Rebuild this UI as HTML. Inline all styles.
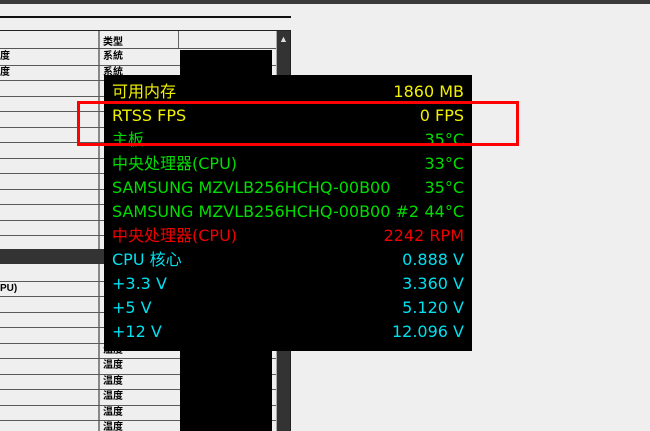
<!DOCTYPE html>
<html><head><meta charset="utf-8"><style>
body{margin:0;width:650px;height:431px;overflow:hidden;background:#efefef;position:relative;font-family:"Liberation Sans","Noto Sans CJK SC",sans-serif}
.a{position:absolute}
.row{position:absolute;left:0;width:276px;height:15.5px;border-bottom:1px solid #5a5a5a;font-size:10px;font-weight:bold;line-height:15px;overflow:hidden}
.ov{position:absolute;left:104px;top:75px;width:368px;height:276px;background:#000;font-family:"DejaVu Sans","Noto Sans CJK SC",sans-serif;font-size:16px}
.ov div{position:absolute;left:8px;right:8px;height:24px;line-height:24px;white-space:nowrap}
.ov span{position:absolute;right:0;top:0}
</style></head><body>
<div class="a" style="left:0;top:0;width:650px;height:4px;background:#3a3a3a"></div>
<div class="a" style="left:0;top:16px;width:291px;height:2px;background:#111"></div>
<div class="a" style="left:0;top:30px;width:291px;height:1px;background:#222"></div>
<div class="a" style="left:290px;top:30px;width:1px;height:401px;background:#222"></div>
<div class="a" style="left:98px;top:31px;width:2px;height:400px;background:#888"></div>
<div class="a" style="left:178px;top:31px;width:1px;height:18px;background:#666"></div>
<div class="a" style="left:103px;top:33px;font-size:10px;font-weight:bold">类型</div>
<div class="a" style="left:0;top:48px;width:276px;height:1px;background:#555"></div>
<div class="row" style="top:49px"><span style="position:absolute;left:0">度</span><span style="position:absolute;left:103px">系統</span></div>
<div class="row" style="top:64.5px"><span style="position:absolute;left:0">度</span><span style="position:absolute;left:103px">系統</span></div>
<div class="row" style="top:80px"></div>
<div class="row" style="top:95.5px"></div>
<div class="row" style="top:111px"></div>
<div class="row" style="top:126.5px"></div>
<div class="row" style="top:142px"></div>
<div class="row" style="top:157.5px"></div>
<div class="row" style="top:173px"></div>
<div class="row" style="top:188.5px"></div>
<div class="row" style="top:204px"></div>
<div class="row" style="top:219.5px"></div>
<div class="row" style="top:235px"></div>
<div class="a" style="left:0;top:249px;width:276px;height:15px;background:#333"></div>
<div class="row" style="top:265px"></div>
<div class="row" style="top:280.5px"><span style="position:absolute;left:0">PU)</span></div>
<div class="row" style="top:296px"></div>
<div class="row" style="top:311.5px"></div>
<div class="row" style="top:327px"></div>
<div class="row" style="top:342.5px"><span style="position:absolute;left:103px">温度</span></div>
<div class="row" style="top:358px"><span style="position:absolute;left:103px">温度</span></div>
<div class="row" style="top:373.5px"><span style="position:absolute;left:103px">温度</span></div>
<div class="row" style="top:389px"><span style="position:absolute;left:103px">温度</span></div>
<div class="row" style="top:404.5px"><span style="position:absolute;left:103px">温度</span></div>
<div class="row" style="top:420px;height:11px;border-bottom:none"><span style="position:absolute;left:103px">温度</span></div>
<div class="a" style="left:180px;top:50px;width:92px;height:381px;background:#000"></div>
<div class="a" style="left:276px;top:31px;width:13px;height:400px;background:#333;border-left:1px solid #aaa"></div>
<div class="a" style="left:279px;top:34px;color:#ddd;font-size:9px">▲</div>
<div class="ov">
<div style="top:5px;color:#f0f000">可用内存<span>1860 MB</span></div>
<div style="top:29px;color:#f0f000">RTSS FPS<span>0 FPS</span></div>
<div style="top:53px;color:#00dd00">主板<span>35°C</span></div>
<div style="top:77px;color:#00dd00">中央处理器(CPU)<span>33°C</span></div>
<div style="top:101px;color:#00dd00">SAMSUNG MZVLB256HCHQ-00B00<span>35°C</span></div>
<div style="top:125px;color:#00dd00">SAMSUNG MZVLB256HCHQ-00B00 #2<span>44°C</span></div>
<div style="top:149px;color:#f00000">中央处理器(CPU)<span>2242 RPM</span></div>
<div style="top:173px;color:#00e0f0">CPU 核心<span>0.888 V</span></div>
<div style="top:197px;color:#00e0f0">+3.3 V<span>3.360 V</span></div>
<div style="top:221px;color:#00e0f0">+5 V<span>5.120 V</span></div>
<div style="top:245px;color:#00e0f0">+12 V<span>12.096 V</span></div>
</div>
<div class="a" style="left:77px;top:101px;width:436px;height:39px;border:3px solid #f00"></div>
</body></html>
